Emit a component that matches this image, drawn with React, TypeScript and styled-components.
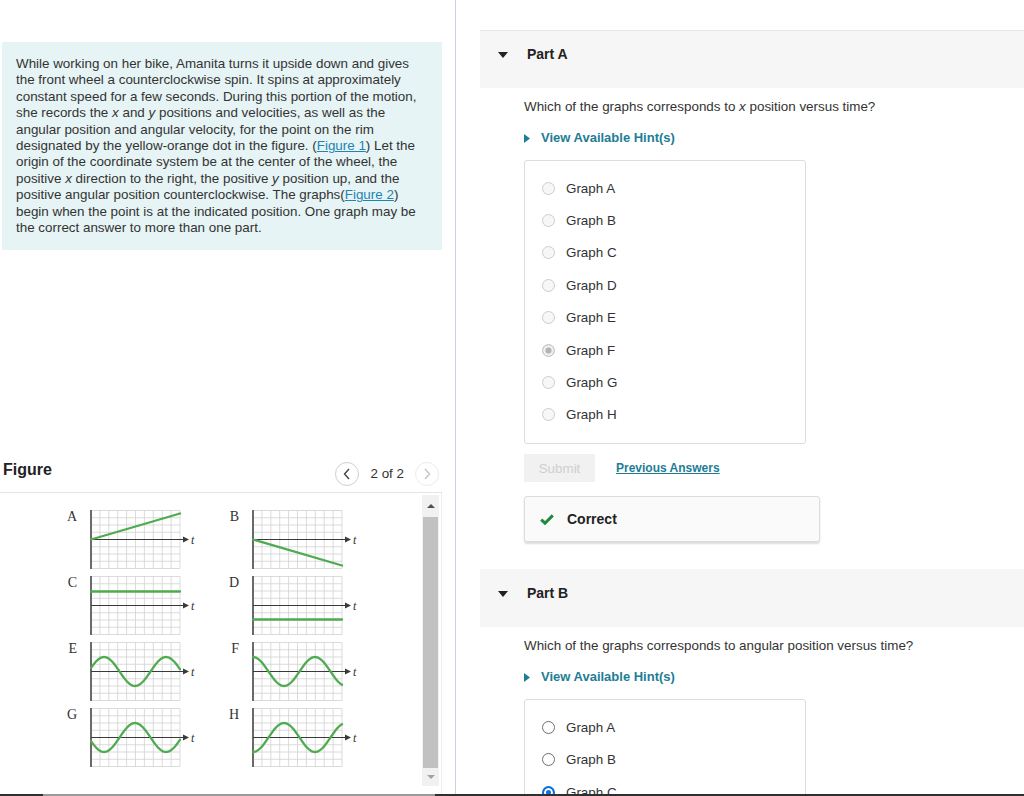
import styled, { createGlobalStyle, css } from 'styled-components';

const GlobalStyle = createGlobalStyle`
	html, body {
		margin: 0;
		padding: 0;
		background: #ffffff;
	}
	body {
		font-family: 'Liberation Sans', Arial, sans-serif;
		color: #333333;
	}
	* {
		box-sizing: border-box;
	}
`;

const Page = styled.div`
	display: flex;
	flex-direction: column;
	width: 1024px;
	height: 796px;
	overflow: hidden;
`;

const Main = styled.div`
	display: flex;
	flex-direction: row;
	height: 794px;
	flex-shrink: 0;
	min-height: 0;
	overflow: hidden;
`;

const BottomBar = styled.div`
	display: flex;
	height: 2px;
	flex-shrink: 0;
	background-color: #2f2f2f;
`;

const BottomThumb = styled.div`
	margin-left: 43px;
	width: 392px;
	background-color: #9a9a9a;
`;

/* ---------- left pane ---------- */

const LeftPane = styled.div`
	display: flex;
	flex-direction: column;
	width: 456px;
	flex-shrink: 0;
	padding-top: 42px;
	border-right: 1px solid #c9d3dd;
`;

const ProblemBox = styled.div`
	flex-shrink: 0;
	margin-left: 2px;
	width: 440px;
	padding: 14px;
	background-color: #e6f4f5;
	font-size: 13.4px;
	line-height: 16.4px;
	color: #333333;
`;

const TextLink = styled.a`
	color: #1f84b0;
	text-decoration: underline;
	cursor: pointer;
`;

const FigureSection = styled.div`
	display: flex;
	flex-direction: column;
	margin-top: 205px;
	width: 442px;
	flex: 1;
	min-height: 0;
`;

const FigureHeader = styled.div`
	display: flex;
	flex-direction: row;
	align-items: center;
	justify-content: space-between;
	flex-shrink: 0;
	height: 38px;
	padding: 0 3px;
	border-bottom: 1px solid #e4e4e4;
`;

const FigureTitle = styled.div`
	margin-bottom: 8px;
	font-size: 16px;
	font-weight: bold;
	color: #222222;
`;

const Pager = styled.div`
	display: flex;
	flex-direction: row;
	align-items: center;
	gap: 11px;
	font-size: 13.4px;
	color: #333333;
`;

const PagerButton = styled.button<{ $disabled?: boolean }>`
	display: flex;
	align-items: center;
	justify-content: center;
	width: 24px;
	height: 24px;
	padding: 0;
	border-radius: 50%;
	background: #ffffff;
	border: 1px solid ${({ $disabled }) => ($disabled ? '#ececec' : '#cfcfcf')};
	color: ${({ $disabled }) => ($disabled ? '#c4c4c4' : '#444444')};
	cursor: pointer;
`;

const FigureBody = styled.div`
	display: flex;
	flex-direction: row;
	flex: 1;
	min-height: 0;
	border-right: 1px solid #eeeeee;
`;

const GraphGrid = styled.div`
	flex: 1;
	display: grid;
	grid-template-columns: 162px 162px;
	grid-auto-rows: 59px;
	align-content: start;
	row-gap: 6.7px;
	padding: 17px 0 0 63px;
`;

const GraphCell = styled.div`
	display: flex;
	flex-direction: row;
	align-items: flex-start;
`;

const GraphLabel = styled.span`
	width: 27px;
	padding-right: 13px;
	text-align: right;
	font-family: 'Liberation Serif', 'Times New Roman', serif;
	font-size: 14px;
	line-height: 14px;
	color: #333333;
`;

const ScrollTrack = styled.div`
	display: flex;
	flex-direction: column;
	width: 17px;
	height: 291px;
	margin: 2px 2px 0 0;
	background-color: #f1f1f1;
`;

const ScrollArrow = styled.div<{ $dir: 'up' | 'down' }>`
	display: flex;
	align-items: center;
	justify-content: center;
	height: ${({ $dir }) => ($dir === 'up' ? '22px' : '18px')};
	&::after {
		content: '';
		width: 0;
		height: 0;
		border-left: 4px solid transparent;
		border-right: 4px solid transparent;
		${({ $dir }) =>
			$dir === 'up'
				? css`border-bottom: 4px solid #505050;`
				: css`border-top: 4px solid #a3a3a3;`}
	}
`;

const ScrollThumb = styled.div`
	flex: 1;
	margin: 0 1px;
	background-color: #c1c1c1;
`;

/* ---------- right pane ---------- */

const RightPane = styled.div`
	flex: 1;
	display: flex;
	flex-direction: column;
	padding: 30px 0 0 24px;
	min-width: 0;
`;

const PartHeader = styled.div<{ $first?: boolean }>`
	display: flex;
	flex-direction: row;
	align-items: flex-start;
	flex-shrink: 0;
	gap: 19px;
	height: 58px;
	padding: 15px 0 0 18px;
	margin-top: ${({ $first }) => ($first ? '0' : '27px')};
	background-color: #f6f6f6;
	border-top: 1px solid ${({ $first }) => ($first ? '#e6e6e6' : '#f6f6f6')};

	& > svg {
		margin-top: 6px;
	}
`;

const PartTitle = styled.div`
	font-size: 14px;
	line-height: 16px;
	font-weight: bold;
	color: #222222;
`;

const PartBody = styled.div`
	display: flex;
	flex-direction: column;
	align-items: flex-start;
	flex-shrink: 0;
	padding-left: 44px;
`;

const Question = styled.div`
	margin-top: 11px;
	font-size: 13.4px;
	line-height: 16px;
	color: #333333;
`;

const HintToggle = styled.button`
	display: flex;
	flex-direction: row;
	align-items: center;
	gap: 11px;
	margin-top: 15px;
	padding: 0;
	background: transparent;
	border: 0;
	font-family: 'Liberation Sans', Arial, sans-serif;
	font-size: 13px;
	line-height: 16px;
	font-weight: bold;
	color: #1e7d96;
	cursor: pointer;
`;

const AnswerBox = styled.div`
	display: flex;
	flex-direction: column;
	flex-shrink: 0;
	width: 282px;
	margin-top: 14px;
	padding: 11px 0 12px 17px;
	border: 1px solid #dddddd;
	border-radius: 3px;
	background-color: #ffffff;
`;

const RadioRow = styled.label`
	display: flex;
	flex-direction: row;
	align-items: center;
	flex-shrink: 0;
	gap: 11px;
	height: 32.4px;
	font-size: 13.4px;
	color: #333333;
`;

type RadioVariant = 'disabled' | 'disabledChecked' | 'open' | 'checked';

const RadioMark = styled.span<{ $variant: RadioVariant }>`
	width: 13px;
	height: 13px;
	border-radius: 50%;
	flex-shrink: 0;
	${({ $variant }) => {
		switch ($variant) {
			case 'disabled':
				return css`
					border: 1px solid #cdcdcd;
					background: #f7f7f7;
				`;
			case 'disabledChecked':
				return css`
					border: 1px solid #c8c8c8;
					background: #b3b3b3;
					box-shadow: inset 0 0 0 2.5px #efefef;
				`;
			case 'checked':
				return css`
					border: 2px solid #0b6fe0;
					background: #0b6fe0;
					box-shadow: inset 0 0 0 2px #ffffff;
				`;
			default:
				return css`
					border: 1px solid #6e6e6e;
					background: #ffffff;
				`;
		}
	}}
`;

const ActionRow = styled.div`
	display: flex;
	flex-direction: row;
	align-items: center;
	gap: 21px;
	margin-top: 10px;
`;

const SubmitButton = styled.button`
	width: 71px;
	height: 28px;
	border: 0;
	background-color: #f1f1f1;
	font-family: 'Liberation Sans', Arial, sans-serif;
	font-size: 13.4px;
	color: #cfcfcf;
`;

const PreviousLink = styled.a`
	font-size: 12px;
	font-weight: bold;
	color: #1e7d96;
	text-decoration: underline;
	cursor: pointer;
`;

const FeedbackBox = styled.div`
	display: flex;
	flex-direction: row;
	align-items: center;
	flex-shrink: 0;
	gap: 13px;
	width: 296px;
	height: 46px;
	margin-top: 14px;
	padding-left: 15px;
	border: 1px solid #dcdcdc;
	border-radius: 3px;
	background-color: #fafafa;
	box-shadow: 0 2px 2px rgba(0, 0, 0, 0.14);
	font-size: 14px;
	font-weight: bold;
	color: #222222;
`;

/* ---------- small drawings ---------- */

const CaretDown = () => (
	<svg width="10" height="6" viewBox="0 0 10 6">
		<polygon points="0,0 10,0 5,6" fill="#222" />
	</svg>
);

const CaretRight = () => (
	<svg width="6" height="9" viewBox="0 0 6 9">
		<polygon points="0,0 6,4.5 0,9" fill="#1e7d96" />
	</svg>
);

const Chevron = ({ dir }: { dir: 'left' | 'right' }) => (
	<svg width="8" height="12" viewBox="0 0 8 12">
		<polyline
			points={dir === 'left' ? '6,1 1.5,6 6,11' : '2,1 6.5,6 2,11'}
			fill="none"
			stroke="currentColor"
			strokeWidth="1.4"
		/>
	</svg>
);

const CheckIcon = () => (
	<svg width="14" height="11" viewBox="0 0 14 11">
		<polyline points="1.2,5.6 5,9.2 12.8,1.4" fill="none" stroke="#1f8a3b" strokeWidth="3" />
	</svg>
);

type GraphKind = 'A' | 'B' | 'C' | 'D' | 'E' | 'F' | 'G' | 'H';

const X0 = 1;
const X1 = 90;
const Y0 = 0.5;
const Y1 = 58.5;
const AXIS = 29.5;
const AMP = 14.5;
const PERIOD = 62;

const curvePath = (kind: GraphKind) => {
	switch (kind) {
		case 'A':
			return `M${X0},${AXIS} L${X1},${Y0 + 3}`;
		case 'B':
			return `M${X0},${AXIS} L${X1},${Y1 - 3}`;
		case 'C':
			return `M${X0},${Y0 + 15} L${X1},${Y0 + 15}`;
		case 'D':
			return `M${X0},${AXIS + 14} L${X1},${AXIS + 14}`;
		default: {
			const pts: string[] = [];
			for (let i = 0; i <= 89; i++) {
				const ph = (2 * Math.PI * i) / PERIOD;
				let v = 0;
				if (kind === 'E') v = Math.sin(ph + 0.25);
				if (kind === 'F') v = Math.cos(ph);
				if (kind === 'G') v = -Math.sin(ph + 0.25);
				if (kind === 'H') v = -Math.cos(ph);
				pts.push(`${(X0 + i).toFixed(1)},${(AXIS - AMP * v).toFixed(2)}`);
			}
			return `M${pts.join(' L')}`;
		}
	}
};

const GraphPlot = ({ kind }: { kind: GraphKind }) => {
	const cols = Array.from({ length: 11 }, (_, i) => X0 + (i * (X1 - X0)) / 10);
	const rows = Array.from({ length: 9 }, (_, i) => Y0 + (i * (Y1 - Y0)) / 8);
	return (
		<svg width="110" height="59" viewBox="0 0 110 59">
			{cols.map((x) => (
				<line key={`c${x}`} x1={x} y1={Y0} x2={x} y2={Y1} stroke="#d2d2d2" strokeWidth="0.8" />
			))}
			{rows.map((y) => (
				<line key={`r${y}`} x1={X0} y1={y} x2={X1} y2={y} stroke="#d2d2d2" strokeWidth="0.8" />
			))}
			<line x1={X0} y1={0} x2={X0} y2={59} stroke="#6a6a6a" strokeWidth="2" />
			<line x1={X0} y1={AXIS} x2={94} y2={AXIS} stroke="#3a3a3a" strokeWidth="1.1" />
			<polygon points={`93,${AXIS - 3} 99,${AXIS} 93,${AXIS + 3}`} fill="#3a3a3a" />
			<text
				x="101"
				y={AXIS + 4}
				fontFamily="'Liberation Serif', 'Times New Roman', serif"
				fontStyle="italic"
				fontSize="12"
				fill="#333"
			>
				t
			</text>
			<path d={curvePath(kind)} fill="none" stroke="#4fab4f" strokeWidth="2.3" strokeLinecap="round" />
		</svg>
	);
};

/* ---------- parts ---------- */

const GRAPH_KINDS: GraphKind[] = ['A', 'B', 'C', 'D', 'E', 'F', 'G', 'H'];

interface PartProps {
	title: string;
	question: React.ReactNode;
	options: GraphKind[];
	variants: RadioVariant[];
	first?: boolean;
	children?: React.ReactNode;
}

const PartSection = ({ title, question, options, variants, first, children }: PartProps) => (
	<>
		<PartHeader $first={first}>
			<CaretDown />
			<PartTitle>{title}</PartTitle>
		</PartHeader>
		<PartBody>
			<Question>{question}</Question>
			<HintToggle>
				<CaretRight />
				View Available Hint(s)
			</HintToggle>
			<AnswerBox>
				{options.map((opt, i) => (
					<RadioRow key={opt}>
						<RadioMark $variant={variants[i]} />
						Graph {opt}
					</RadioRow>
				))}
			</AnswerBox>
			{children}
		</PartBody>
	</>
);

const App = () => {
	return (
		<>
			<GlobalStyle />
			<Page>
				<Main>
					<LeftPane>
						<ProblemBox>
							While working on her bike, Amanita turns it upside down and gives the front wheel a
							counterclockwise spin. It spins at approximately constant speed for a few seconds.
							During this portion of the motion, she records the <i>x</i> and <i>y</i> positions and
							velocities, as well as the angular position and angular velocity, for the point on the
							rim designated by the yellow-orange dot in the figure. (<TextLink>Figure 1</TextLink>)
							Let the origin of the coordinate system be at the center of the wheel, the positive{' '}
							<i>x</i> direction to the right, the positive <i>y</i> position up, and the positive
							angular position counterclockwise. The graphs(<TextLink>Figure 2</TextLink>) begin when
							the point is at the indicated position. One graph may be the correct answer to more
							than one part.
						</ProblemBox>
						<FigureSection>
							<FigureHeader>
								<FigureTitle>Figure</FigureTitle>
								<Pager>
									<PagerButton>
										<Chevron dir="left" />
									</PagerButton>
									<span>2 of 2</span>
									<PagerButton $disabled>
										<Chevron dir="right" />
									</PagerButton>
								</Pager>
							</FigureHeader>
							<FigureBody>
								<GraphGrid>
									{GRAPH_KINDS.map((k) => (
										<GraphCell key={k}>
											<GraphLabel>{k}</GraphLabel>
											<GraphPlot kind={k} />
										</GraphCell>
									))}
								</GraphGrid>
								<ScrollTrack>
									<ScrollArrow $dir="up" />
									<ScrollThumb />
									<ScrollArrow $dir="down" />
								</ScrollTrack>
							</FigureBody>
						</FigureSection>
					</LeftPane>
					<RightPane>
						<PartSection
							first
							title="Part A"
							question={
								<>
									Which of the graphs corresponds to <i>x</i> position versus time?
								</>
							}
							options={GRAPH_KINDS}
							variants={GRAPH_KINDS.map((k) => (k === 'F' ? 'disabledChecked' : 'disabled'))}
						>
							<ActionRow>
								<SubmitButton disabled>Submit</SubmitButton>
								<PreviousLink>Previous Answers</PreviousLink>
							</ActionRow>
							<FeedbackBox>
								<CheckIcon />
								Correct
							</FeedbackBox>
						</PartSection>
						<PartSection
							title="Part B"
							question="Which of the graphs corresponds to angular position versus time?"
							options={GRAPH_KINDS}
							variants={GRAPH_KINDS.map((k) => (k === 'C' ? 'checked' : 'open'))}
						/>
					</RightPane>
				</Main>
				<BottomBar>
					<BottomThumb />
				</BottomBar>
			</Page>
		</>
	);
};

export default App;
